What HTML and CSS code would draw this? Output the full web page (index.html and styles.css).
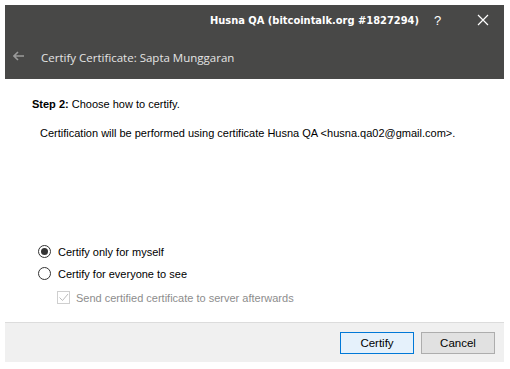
FILE: index.html
```html
<!DOCTYPE html>
<html lang="en">
<head>
    <meta charset="UTF-8">
    <title>Certify Certificate</title>
    <link rel="stylesheet" href="styles.css">
</head>
<body>

    <div class="window">
        <!-- title bar + wizard header -->
        <div class="header">
            <div class="titlebar">
                <span class="title">Husna QA (bitcointalk.org #1827294)</span>
                <span class="help">?</span>
                <span class="close">
                    <svg width="12" height="12" viewBox="0 0 12 12"><path d="M1 1L11 11M11 1L1 11" stroke="#fff" stroke-width="1.2"/></svg>
                </span>
            </div>
            <div class="subtitle">
                <svg class="back" width="12" height="10" viewBox="0 0 12 10"><path d="M1 5H11M5 1L1 5L5 9" stroke="#9a9a9a" stroke-width="1.6" fill="none"/></svg>
                <span>Certify Certificate: Sapta Munggaran</span>
            </div>
        </div>

        <div class="content">
            <p class="step"><b>Step 2:</b> Choose how to certify.</p>
            <p class="info">Certification will be performed using certificate Husna QA &lt;husna.qa02@gmail.com&gt;.</p>

            <div class="options">
                <label class="opt"><span class="radio checked"></span>Certify only for myself</label>
                <label class="opt"><span class="radio"></span>Certify for everyone to see</label>
                <label class="opt sub disabled">
                    <span class="check">
                        <svg width="11" height="11" viewBox="0 0 11 11"><path d="M1.5 5.5L4.5 8.5L10 2" stroke="#bcbcbc" stroke-width="1" fill="none"/></svg>
                    </span>Send certified certificate to server afterwards
                </label>
            </div>
        </div>

        <div class="footer">
            <button class="btn default">Certify</button>
            <button class="btn">Cancel</button>
        </div>
    </div>

</body>
</html>
```
FILE: styles.css
```css
body {
    margin: 5px;
    background: #fff;
    font-family: "Liberation Sans", Arial, sans-serif;
}
.window {
    width: 499px;
    height: 357px;
    display: flex;
    flex-direction: column;
    background: #fff;
}
.header {
    background: #484847;
    height: 74px;
}
.titlebar {
    height: 30px;
    display: flex;
    align-items: center;
    justify-content: flex-end;
    color: #fff;
}
.title {
    font-family: "DejaVu Sans Condensed", "DejaVu Sans", sans-serif;
    font-weight: bold;
    font-size: 11px;
    margin-right: 15px;
}
.help {
    font-size: 13px;
    width: 12px;
    margin-right: 31px;
}
.close {
    display: flex;
    margin-right: 15px;
}
.subtitle {
    display: flex;
    align-items: center;
    height: 44px;
    padding-left: 8px;
    color: #e4e4e4;
    font-family: "Open Sans", sans-serif;
    font-size: 11.5px;
}
.back {
    margin-right: 16px;
    margin-top: -2px;
}
.content {
    flex: 1;
    font-size: 11px;
    font-family: "Liberation Sans", Arial, sans-serif;
    color: #000;
    padding-left: 27px;
}
.step {
    margin: 19px 0 0;
}
.info {
    margin: 17px 0 0 8px;
}
.options {
    margin-top: 106px;
    margin-left: 6px;
    display: flex;
    flex-direction: column;
    gap: 9px;
}
.opt {
    display: flex;
    align-items: center;
    height: 13px;
}
.radio {
    width: 11px;
    height: 11px;
    border: 1px solid #333;
    border-radius: 50%;
    margin-right: 7px;
    position: relative;
}
.radio.checked::after {
    content: "";
    position: absolute;
    left: 2px;
    top: 2px;
    width: 7px;
    height: 7px;
    border-radius: 50%;
    background: #333;
}
.sub {
    margin-left: 19px;
    margin-top: 2px;
}
.disabled {
    color: #8d8d8d;
}
.check {
    width: 11px;
    height: 11px;
    border: 1px solid #cfcfcf;
    margin-right: 6px;
    display: flex;
}
.footer {
    height: 39px;
    border-top: 1px solid #dcdcdc;
    background: #f0f0f0;
    display: flex;
    align-items: center;
    justify-content: flex-end;
    gap: 7px;
    padding-right: 9px;
}
.btn {
    width: 74px;
    height: 22px;
    font-family: "Liberation Sans", Arial, sans-serif;
    font-size: 11.5px;
    color: #000;
    background: #e1e1e1;
    border: 1px solid #adadad;
    padding: 0;
}
.btn.default {
    background: #e5f1fb;
    border-color: #0078d7;
}
```
